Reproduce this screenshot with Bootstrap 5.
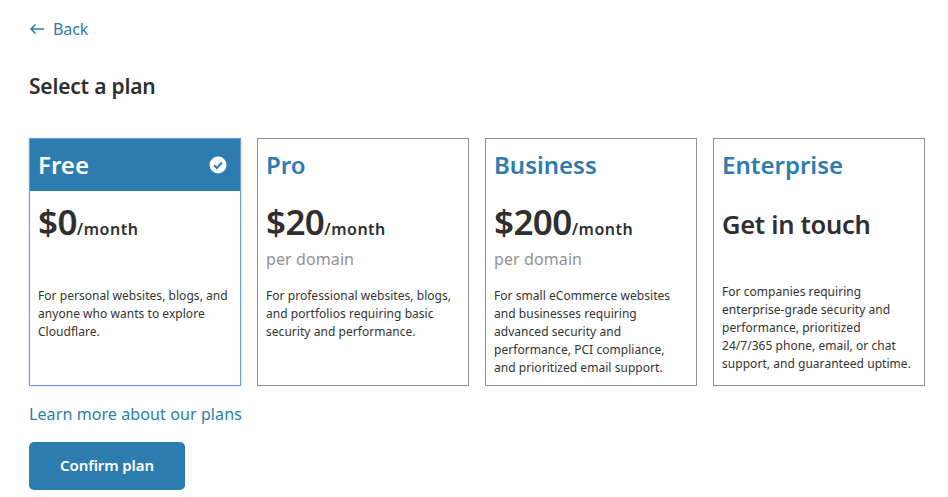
<!DOCTYPE html>
<html lang="en">
<head>
<meta charset="utf-8">
<title>Select a plan</title>
<link href="https://cdn.jsdelivr.net/npm/bootstrap@5.3.0/dist/css/bootstrap.min.css" rel="stylesheet">
<style>
html,body{height:497px;overflow:hidden}
body{font-family:"Noto Sans","Open Sans",sans-serif;color:#2f2f2f;background:#fff}
.shell{padding:17px 23px 0 29px}
.backlink{color:#2c7cb0;font-size:16px;line-height:24px;text-decoration:none;letter-spacing:-.1px;gap:8px}
.pagetitle{font-size:21px;line-height:28px;font-weight:600;margin:31px 0 38px;letter-spacing:-.2px;color:#2f2f2f}
.plans{gap:16px}
.plan{flex:1 1 0;height:248px;border:1px solid #8f8f8f;background:#fff}
.plan.chosen{border-color:#6f9ae8;box-shadow:0 0 1px #6f9ae8}
.planhead{height:52px;padding:0 8px;color:#2c7cb0;font-size:24px;font-weight:600;letter-spacing:0}
.chosen .planhead{background:#2c7cb0;color:#fff;padding-right:13px}
.planbody{padding:0 8px}
.priceline{height:51px;margin-top:5px;font-weight:600;white-space:nowrap}
.amount{font-size:35px;letter-spacing:-.6px}
.unit{font-size:16px;letter-spacing:.5px}
.touch{font-size:25.500px;letter-spacing:-.3px;padding-top:6px}
.perdomain{font-size:16px;line-height:24px;height:24px;color:#919191;margin-bottom:16px;letter-spacing:.1px}
.perdomain.shortgap{height:20px}
.blurb{font-size:12px;line-height:18px;letter-spacing:.04px;margin:0 3px 0 0;color:#333}
.learn{display:block;color:#2c7cb0;font-size:16px;line-height:24px;text-decoration:none;margin:16px 0 16px;letter-spacing:.1px}
.confirm{width:156px;height:48px;background:#2c7cb0;border:0;border-radius:5px;color:#fff;font-size:15px;font-weight:600;letter-spacing:-.1px;padding-top:4px}
.confirm:hover{background:#2c7cb0;color:#fff}
</style>
</head>
<body>
<main class="shell">
  <a class="backlink d-inline-flex align-items-center" href="#">
    <svg width="16" height="12" viewBox="0 0 16 12" fill="none" stroke="#2c7cb0" stroke-width="1.5" aria-hidden="true"><path d="M15 6H2M6.500 1.500 2 6l4.500 4.500"/></svg>
    <span>Back</span>
  </a>
  <h1 class="pagetitle">Select a plan</h1>
  <div class="plans d-flex">
    <section class="plan chosen">
      <div class="planhead d-flex align-items-center justify-content-between">
        <span>Free</span>
        <svg width="18" height="18" viewBox="0 0 18 18" aria-hidden="true"><circle cx="9" cy="9" r="8.500" fill="#fff"/><path d="M5 9.300 7.800 12 13 6.500" fill="none" stroke="#2c7cb0" stroke-width="2"/></svg>
      </div>
      <div class="planbody">
        <div class="priceline"><span class="amount">$0</span><span class="unit">/month</span></div>
        <div class="perdomain"></div>
        <p class="blurb">For personal websites, blogs, and anyone who wants to explore Cloudflare.</p>
      </div>
    </section>
    <section class="plan">
      <div class="planhead d-flex align-items-center"><span>Pro</span></div>
      <div class="planbody">
        <div class="priceline"><span class="amount">$20</span><span class="unit">/month</span></div>
        <div class="perdomain">per domain</div>
        <p class="blurb">For professional websites, blogs, and portfolios requiring basic security and performance.</p>
      </div>
    </section>
    <section class="plan">
      <div class="planhead d-flex align-items-center"><span>Business</span></div>
      <div class="planbody">
        <div class="priceline"><span class="amount">$200</span><span class="unit">/month</span></div>
        <div class="perdomain">per domain</div>
        <p class="blurb">For small eCommerce websites and businesses requiring advanced security and performance, PCI compliance, and prioritized email support.</p>
      </div>
    </section>
    <section class="plan">
      <div class="planhead d-flex align-items-center"><span>Enterprise</span></div>
      <div class="planbody">
        <div class="priceline d-flex align-items-center"><span class="touch">Get in touch</span></div>
        <div class="perdomain shortgap"></div>
        <p class="blurb">For companies requiring enterprise-grade security and performance, prioritized 24/7/365 phone, email, or chat support, and guaranteed uptime.</p>
      </div>
    </section>
  </div>
  <a class="learn" href="#">Learn more about our plans</a>
  <button class="btn confirm" type="button">Confirm plan</button>
</main>
</body>
</html>
